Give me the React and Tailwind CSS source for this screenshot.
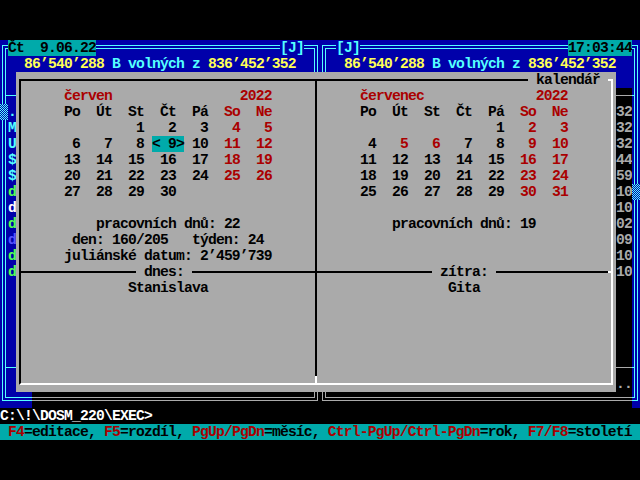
import React from 'react';

// DOS text-mode palette
const CYAN_HI = '#55ffff';
const GRAY = '#aaaaaa';

// box-drawing glyphs inside an 8x16 character cell
const CELL = {
  '║': 'M2.5 0V16M5.5 0V16',
  '╔': 'M2.5 16V5.5H8M5.5 16V8.5H8',
  '╗': 'M0 5.5H5.5V16M0 8.5H2.5V16',
  '╚': 'M2.5 0V8.5H8M5.5 0V5.5H8',
  '╝': 'M5.5 0V8.5H0M2.5 0V5.5H0',
  '╟': 'M2.5 0V16M5.5 0V16M5.5 7.5H8',
  '╢': 'M2.5 0V16M5.5 0V16M0 7.5H2.5',
};

const Glyph = ({ ch, n = 1, color = CYAN_HI, className = 'bg-[#0000aa]' }) => {
  const w = 8 * n;
  let d = CELL[ch];
  if (ch === '═') d = `M0 5.5H${w}M0 8.5H${w}`;
  if (ch === '─') d = `M0 7.5H${w}`;
  return (
    <svg width={w} height={16} className={`block shrink-0 ${className}`} fill="none" stroke={color} strokeWidth="1" shapeRendering="crispEdges">
      <path d={d} />
    </svg>
  );
};

// scroll bar thumb (▒)
const Shade = () => (
  <svg width="8" height="16" className="block shrink-0">
    <defs>
      <pattern id="shade" width="2" height="2" patternUnits="userSpaceOnUse">
        <rect width="2" height="2" fill="#0000aa" />
        <rect width="1" height="1" fill={CYAN_HI} />
        <rect x="1" y="1" width="1" height="1" fill={CYAN_HI} />
      </pattern>
    </defs>
    <rect width="8" height="16" fill="url(#shade)" />
  </svg>
);

const T = ({ className = '', children }) => (
  <span className={`shrink-0 whitespace-pre ${className}`}>{children}</span>
);

const Row = ({ className = '', children }) => <div className={`flex h-4 ${className}`}>{children}</div>;

const FreeSpace = () => (
  <>
    <T className="text-[#ffff55]">86’540’288</T>
    <T className="text-[#55ffff]"> B volných z </T>
    <T className="text-[#ffff55]">836’452’352</T>
  </>
);

const LeftPanel = () => {
  const files = [
    ['.', 'text-[#55ffff]'],
    ['M', 'text-[#55ffff]'],
    ['U', 'text-[#55ffff]'],
    ['$', 'text-[#55ffff]'],
    ['$', 'text-[#55ffff]'],
    ['d', 'text-[#55ff55]'],
    ['d', 'text-white'],
    ['d', 'text-[#55ff55]'],
    ['d', 'text-[#5555ff]'],
    ['d', 'text-[#55ff55]'],
    ['d', 'text-[#55ff55]'],
  ];
  return (
    <div className="flex w-[320px] flex-col bg-[#0000aa]">
      <Row>
        <Glyph ch="╔" />
        <T className="bg-[#00aaaa] text-black">Čt  9.06.22</T>
        <Glyph ch="═" n={23} />
        <T className="text-[#55ffff]">[J]</T>
        <Glyph ch="═" />
        <Glyph ch="╗" />
      </Row>
      <Row>
        <Glyph ch="║" />
        <T>{'  '}</T>
        <FreeSpace />
        <div className="flex-1" />
        <Glyph ch="║" />
      </Row>
      <Row>
        <Glyph ch="║" />
        <div className="flex-1" />
        <Glyph ch="║" />
      </Row>
      <Row>
        <Glyph ch="╟" />
        <Glyph ch="─" n={38} />
        <Glyph ch="╢" />
      </Row>
      {files.map(([c, cls], i) => (
        <Row key={i}>
          {i === 0 ? <Shade /> : <Glyph ch="║" />}
          <T className={cls}>{c}</T>
          <div className="flex-1" />
          <Glyph ch="║" />
        </Row>
      ))}
      {[0, 1, 2, 3, 4].map((i) => (
        <Row key={i}>
          <Glyph ch="║" />
          <div className="flex-1" />
          <Glyph ch="║" />
        </Row>
      ))}
      <Row>
        <Glyph ch="╟" />
        <Glyph ch="─" n={38} />
        <Glyph ch="╢" />
      </Row>
      <Row>
        <Glyph ch="║" />
        <div className="flex-1" />
        <Glyph ch="║" />
      </Row>
      <Row>
        <Glyph ch="╚" />
        <Glyph ch="═" n={3} />
        <Glyph ch="═" n={35} color={GRAY} className="bg-black" />
        <Glyph ch="╝" color={GRAY} className="bg-black" />
      </Row>
    </div>
  );
};

const RightPanel = () => {
  const sizes = ['32', '32', '32', '44', '59', '10', '10', '02', '09', '10', '10'];
  return (
    <div className="flex w-[320px] flex-col bg-[#0000aa]">
      <Row>
        <Glyph ch="╔" />
        <Glyph ch="═" />
        <T className="text-[#55ffff]">[J]</T>
        <Glyph ch="═" n={26} />
        <T className="bg-[#00aaaa] text-black">17:03:44</T>
        <Glyph ch="╗" />
      </Row>
      <Row>
        <Glyph ch="║" />
        <T>{'  '}</T>
        <FreeSpace />
        <div className="flex-1" />
        <Glyph ch="║" />
      </Row>
      <Row>
        <Glyph ch="║" />
        <div className="flex-1" />
        <Glyph ch="║" />
      </Row>
      <Row>
        <Glyph ch="╟" />
        <div className="flex-1" />
        <Glyph ch="─" n={2} color={GRAY} className="bg-black" />
        <Glyph ch="╢" />
      </Row>
      {sizes.map((s, i) => (
        <Row key={i}>
          <Glyph ch="║" />
          <div className="flex-1" />
          <T className="bg-black text-[#aaaaaa]">{s}</T>
          {i === 5 ? <Shade /> : <Glyph ch="║" />}
        </Row>
      ))}
      {[0, 1, 2, 3, 4].map((i) => (
        <Row key={i}>
          <Glyph ch="║" />
          <div className="flex-1" />
          <div className="w-4 bg-black" />
          <Glyph ch="║" />
        </Row>
      ))}
      <Row>
        <Glyph ch="╟" />
        <div className="flex-1" />
        <Glyph ch="─" n={2} color={GRAY} className="bg-black" />
        <Glyph ch="╢" />
      </Row>
      <Row>
        <Glyph ch="║" />
        <div className="flex-1" />
        <T className="bg-black text-[#aaaaaa]">..</T>
        <Glyph ch="║" />
      </Row>
      <Row>
        <Glyph ch="╚" color={GRAY} className="bg-black" />
        <Glyph ch="═" n={38} color={GRAY} className="bg-black" />
        <Glyph ch="╝" />
      </Row>
    </div>
  );
};

// one week of the month, 4 chars per day column
const Week = ({ days, red = [], hi }) => (
  <Row className="-ml-[5px]">
    <T>{'     '}</T>
    {days.map((d, k) => {
      const s = d ? String(d).padStart(2, ' ') : '  ';
      if (d && d === hi) {
        return <T key={k} className="bg-[#00aaaa] text-black">{'<' + s + '>'}</T>;
      }
      const isRed = k >= 5 || red.includes(d);
      return <T key={k} className={isRed ? 'text-[#aa0000]' : 'text-black'}>{' ' + s + ' '}</T>;
    })}
  </Row>
);

const Month = ({ name, weeks, red, hi }) => (
  <>
    <Row className="-ml-[5px]">
      <T className="text-[#aa0000]">{'      ' + name.padEnd(22, ' ') + '2022'}</T>
    </Row>
    <Row className="-ml-[5px]">
      <T>{'      Po  Út  St  Čt  Pá  '}</T>
      <T className="text-[#aa0000]">So  Ne</T>
    </Row>
    {weeks.map((w, i) => (
      <Week key={i} days={w} red={red} hi={hi} />
    ))}
  </>
);

const june = [
  [0, 0, 1, 2, 3, 4, 5],
  [6, 7, 8, 9, 10, 11, 12],
  [13, 14, 15, 16, 17, 18, 19],
  [20, 21, 22, 23, 24, 25, 26],
  [27, 28, 29, 30, 0, 0, 0],
];

const july = [
  [0, 0, 0, 0, 1, 2, 3],
  [4, 5, 6, 7, 8, 9, 10],
  [11, 12, 13, 14, 15, 16, 17],
  [18, 19, 20, 21, 22, 23, 24],
  [25, 26, 27, 28, 29, 30, 31],
];

const Line = ({ className = 'flex-1' }) => <div className={`h-[2px] bg-black ${className}`} />;

const Calendar = () => (
  <div className="absolute left-4 top-[72px] h-[320px] w-[600px] bg-[#aaaaaa] px-[3px] pt-[7px] text-black">
    <div className="relative flex h-[306px] border-2 border-b-white border-l-black border-r-white border-t-black">
      {/* left half: June */}
      <div className="flex w-[294px] flex-col pt-[7px]">
        <Month name="červen" weeks={june} hi={9} />
        <Row />
        <Row className="-ml-[5px]">
          <T>{'          pracovních dnů: 22'}</T>
        </Row>
        <Row className="-ml-[5px]">
          <T>{'       den: 160/205   týden: 24'}</T>
        </Row>
        <Row className="-ml-[5px]">
          <T>{'      juliánské datum: 2’459’739'}</T>
        </Row>
        <Row className="items-center">
          <Line className="w-[115px]" />
          <T>{' dnes: '}</T>
          <Line />
        </Row>
        <Row className="-ml-[5px]">
          <T>{'              Stanislava'}</T>
        </Row>
      </div>

      {/* divider */}
      <div className="flex w-[2px] flex-col">
        <div className="flex-1 bg-black" />
        <div className="h-[7px] bg-white" />
      </div>

      {/* right half: July */}
      <div className="flex flex-1 flex-col pt-[7px]">
        <Month name="červenec" weeks={july} red={[5, 6]} />
        <Row />
        <Row className="-ml-[5px]">
          <T>{'          pracovních dnů: 19'}</T>
        </Row>
        <Row />
        <Row />
        <Row className="items-center">
          <Line className="w-[115px]" />
          <T>{' zítra: '}</T>
          <Line />
          <div className="h-[2px] w-[3px] bg-white" />
        </Row>
        <Row className="-ml-[5px]">
          <T>{'                 Gita'}</T>
        </Row>
      </div>

      <T className="absolute left-[507px] top-[-9px] h-4 bg-[#aaaaaa]">{' kalendář '}</T>
      <div className="absolute left-[587px] top-[-2px] h-[2px] w-[5px] bg-white" />
    </div>
  </div>
);

const keys = [
  ['F4', '=editace, '],
  ['F5', '=rozdíl, '],
  ['PgUp/PgDn', '=měsíc, '],
  ['Ctrl-PgUp/Ctrl-PgDn', '=rok, '],
  ['F7/F8', '=století'],
];

export default function App() {
  return (
    <div className="relative h-[480px] w-[640px] overflow-hidden bg-black font-['Liberation_Mono',monospace] text-[14.667px] font-bold leading-[16px] tracking-[-0.8px]">
      <div className="h-[40px]" />
      <div className="flex">
        <LeftPanel />
        <RightPanel />
      </div>
      <Row>
        <T className="text-white">{'C:\\!\\DOSM_220\\EXEC>'}</T>
      </Row>
      <Row className="bg-[#00aaaa] text-black">
        <T>{' '}</T>
        {keys.map(([k, rest]) => (
          <React.Fragment key={k}>
            <T className="text-[#aa0000]">{k}</T>
            <T>{rest}</T>
          </React.Fragment>
        ))}
      </Row>
      <Calendar />
    </div>
  );
}
